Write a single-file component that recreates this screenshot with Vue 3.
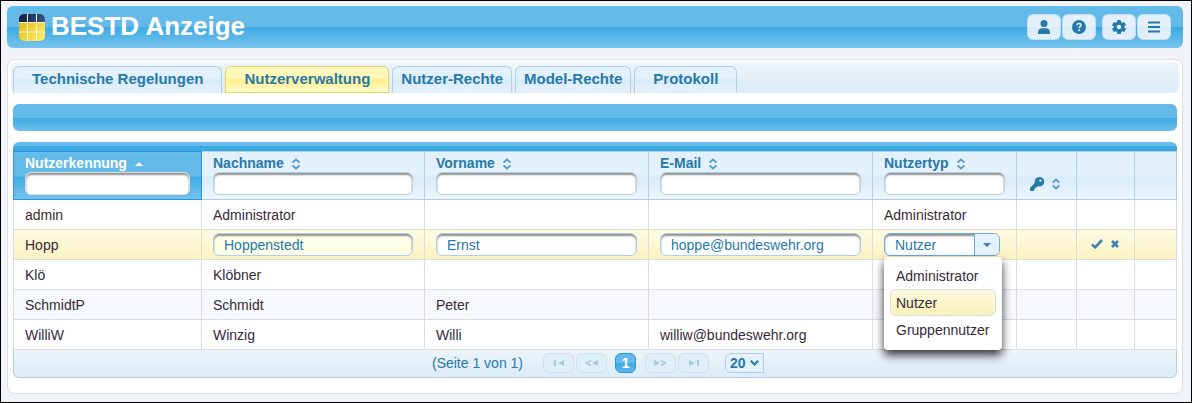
<script setup>
import { ref } from 'vue'

const tabs = [
  { name: 'Technische Regelungen', wide: true },
  { name: 'Nutzerverwaltung', wide: true },
  { name: 'Nutzer-Rechte', wide: false },
  { name: 'Model-Rechte', wide: false },
  { name: 'Protokoll', wide: true },
]
const activeTab = ref('Nutzerverwaltung')

const columns = ['Nutzerkennung', 'Nachname', 'Vorname', 'E-Mail', 'Nutzertyp']
const roles = ['Administrator', 'Nutzer', 'Gruppennutzer']

const rows = [
  { id: 'admin', last: 'Administrator', first: '', mail: '', role: 'Administrator' },
  { id: 'Hopp', edit: true },
  { id: 'Klö', last: 'Klöbner', first: '', mail: '', role: '' },
  { id: 'SchmidtP', last: 'Schmidt', first: 'Peter', mail: '', role: '' },
  { id: 'WilliW', last: 'Winzig', first: 'Willi', mail: 'williw@bundeswehr.org', role: '' },
]
const draft = ref({ last: 'Hoppenstedt', first: 'Ernst', mail: 'hoppe@bundeswehr.org', role: 'Nutzer' })
const pageSize = ref('20')
</script>

<template>
  <div class="page">
    <header class="topbar">
      <svg class="logo" width="26" height="27" viewBox="0 0 26 27" aria-hidden="true">
        <defs>
          <linearGradient id="gold" x1="0" y1="0" x2="1" y2="1">
            <stop offset="0" stop-color="#d9b40c" />
            <stop offset="1" stop-color="#fff06a" />
          </linearGradient>
          <linearGradient id="navy" x1="0" y1="0" x2="1" y2="0">
            <stop offset="0" stop-color="#141f45" />
            <stop offset="1" stop-color="#35548a" />
          </linearGradient>
          <clipPath id="tile"><rect width="26" height="27" rx="5" /></clipPath>
        </defs>
        <g clip-path="url(#tile)">
          <rect width="26" height="27" fill="url(#gold)" />
          <rect width="26" height="8" fill="url(#navy)" />
          <path d="M8.500 0V27M17.500 0V27M0 8.500H26M0 18H26" stroke="#fff6cf" stroke-width="1" />
        </g>
      </svg>
      <h1>BESTD Anzeige</h1>
      <div class="actions">
        <div class="group">
          <button type="button" aria-label="Benutzer">
            <svg width="12" height="14" viewBox="0 0 12 14"><circle cx="6" cy="3.500" r="3.500" /><path d="M0 14V12.500C0 9.800 1.800 8.300 4.300 8.300H7.700C10.200 8.300 12 9.800 12 12.500V14Z" /></svg>
          </button>
          <button type="button" aria-label="Hilfe">
            <svg width="14" height="14" viewBox="0 0 14 14"><circle cx="7" cy="7" r="7" /><path d="M5 5.400C5.100 4.200 5.900 3.600 7 3.600C8.200 3.600 9 4.300 9 5.300C9 6.600 7.100 6.700 7.100 8.200" fill="none" stroke="#e4f1fb" stroke-width="1.500" /><circle cx="7.100" cy="10.200" r="1" fill="#e4f1fb" /></svg>
          </button>
        </div>
        <div class="group">
          <button type="button" aria-label="Einstellungen">
            <svg width="14" height="14" viewBox="0 0 14 14">
              <g>
                <rect v-for="a in [0, 60, 120]" :key="a" x="5" y="0" width="4" height="14" rx="0.800" :transform="`rotate(${a} 7 7)`" />
                <circle cx="7" cy="7" r="5.400" />
                <circle cx="7" cy="7" r="2.200" fill="#e4f1fb" />
              </g>
            </svg>
          </button>
          <button type="button" aria-label="Menü">
            <svg width="12" height="12" viewBox="0 0 12 12"><path d="M0.500 1.500H11.500M0.500 6H11.500M0.500 10.500H11.500" fill="none" stroke="#2779aa" stroke-width="1.800" stroke-linecap="round" /></svg>
          </button>
        </div>
      </div>
    </header>

    <main class="panel">
      <nav class="tabs">
        <button
          v-for="t in tabs"
          :key="t.name"
          type="button"
          class="tab"
          :class="{ wide: t.wide, active: t.name === activeTab }"
          @click="activeTab = t.name"
        >{{ t.name }}</button>
      </nav>

      <div class="content">
        <div class="toolbar"></div>

        <div class="grid-head"></div>
        <table>
          <colgroup>
            <col class="c-id"><col class="c-last"><col class="c-text"><col class="c-text">
            <col class="c-role"><col class="c-key"><col class="c-edit"><col class="c-end">
          </colgroup>
          <thead>
            <tr>
              <th v-for="(c, i) in columns" :key="c" :class="{ sorted: i === 0 }">
                <div class="caption">
                  <label :for="'filter-' + i">{{ c }}</label>
                  <svg v-if="i === 0" width="8" height="4" viewBox="0 0 8 4"><path d="M0 4L4 0L8 4Z" fill="#fff" /></svg>
                  <svg v-else width="8" height="12" viewBox="0 0 8 12"><path d="M0.500 4.500L4 1.500L7.500 4.500M0.500 7.500L4 10.500L7.500 7.500" class="sort" /></svg>
                </div>
                <input :id="'filter-' + i" type="text" class="field">
              </th>
              <th>
                <div class="keyhead">
                  <svg width="14" height="14" viewBox="0 0 14 14"><path fill="#2779aa" fill-rule="evenodd" d="M9.300 0A4.700 4.700 0 1 1 8 9.100L7 10.200H5.700V11.600H4.300V13.200L3.500 14H0.600L0 13.400V10.700L4.800 5.900A4.700 4.700 0 0 1 9.300 0ZM10.400 2.400A1.200 1.200 0 1 0 10.401 4.800A1.200 1.200 0 0 0 10.400 2.400Z" /></svg>
                  <svg width="8" height="12" viewBox="0 0 8 12"><path d="M0.500 4.500L4 1.500L7.500 4.500M0.500 7.500L4 10.500L7.500 7.500" class="sort" /></svg>
                </div>
              </th>
              <th></th>
              <th></th>
            </tr>
          </thead>
          <tbody>
            <tr v-for="(r, i) in rows" :key="r.id" :class="{ editing: r.edit, odd: i === 3 }">
              <td>{{ r.id }}</td>
              <template v-if="r.edit">
                <td class="control"><input v-model="draft.last" type="text" class="field current" aria-label="Nachname"></td>
                <td class="control"><input v-model="draft.first" type="text" class="field" aria-label="Vorname"></td>
                <td class="control"><input v-model="draft.mail" type="text" class="field" aria-label="E-Mail"></td>
                <td class="control">
                  <div class="combo">
                    <select v-model="draft.role" aria-label="Nutzertyp">
                      <option v-for="o in roles" :key="o">{{ o }}</option>
                    </select>
                    <span class="trigger"><svg width="8" height="4" viewBox="0 0 8 4"><path d="M0 0H8L4 4Z" fill="#3d80b3" /></svg></span>
                    <ul class="menu" role="listbox" aria-label="Nutzertyp">
                      <li
                        v-for="o in roles"
                        :key="o"
                        role="option"
                        :aria-selected="o === draft.role"
                        :class="{ chosen: o === draft.role }"
                        @click="draft.role = o"
                      >{{ o }}</li>
                    </ul>
                  </div>
                </td>
                <td></td>
                <td class="control">
                  <div class="rowtools">
                    <button type="button" aria-label="Speichern"><svg width="12" height="10" viewBox="0 0 12 10"><path d="M1 5.500L4.200 8.300L11 1" fill="none" stroke="#3d80b3" stroke-width="2.600" /></svg></button>
                    <button type="button" aria-label="Abbrechen"><svg width="8" height="8" viewBox="0 0 8 8"><path d="M1 1L7 7M7 1L1 7" fill="none" stroke="#3d80b3" stroke-width="2.600" /></svg></button>
                  </div>
                </td>
              </template>
              <template v-else>
                <td>{{ r.last }}</td>
                <td>{{ r.first }}</td>
                <td>{{ r.mail }}</td>
                <td>{{ r.role }}</td>
                <td></td>
                <td></td>
              </template>
              <td></td>
            </tr>
          </tbody>
        </table>

        <div class="pager">
          <span>(Seite 1 von 1)</span>
          <div class="steps">
            <button type="button" disabled aria-label="Erste Seite"><svg width="10" height="6" viewBox="0 0 10 6"><path d="M0 0H2V6H0ZM10 0V6L4 3Z" /></svg></button>
            <button type="button" disabled aria-label="Vorherige Seite"><svg width="13" height="6" viewBox="0 0 13 6"><path d="M13 0V6L7 3Z" /><path d="M6 0.500L1 3L6 5.500" class="line" /></svg></button>
          </div>
          <button type="button" class="current-page">1</button>
          <div class="steps">
            <button type="button" disabled aria-label="Nächste Seite"><svg width="13" height="6" viewBox="0 0 13 6"><path d="M0 0V6L6 3Z" /><path d="M7 0.500L12 3L7 5.500" class="line" /></svg></button>
            <button type="button" disabled aria-label="Letzte Seite"><svg width="10" height="6" viewBox="0 0 10 6"><path d="M8 0H10V6H8ZM0 0V6L6 3Z" /></svg></button>
          </div>
          <div class="size">
            <select v-model="pageSize" aria-label="Zeilen pro Seite">
              <option>20</option>
              <option>50</option>
            </select>
            <svg width="9" height="6" viewBox="0 0 9 6"><path d="M0.800 0.800L4.500 4.500L8.200 0.800" fill="none" stroke="#2779aa" stroke-width="2" /></svg>
          </div>
        </div>
      </div>
    </main>
  </div>
</template>

<style>
body {
  background: #f0f4f8;
}
</style>

<style scoped>
* {
  box-sizing: border-box;
}
.page {
  min-height: 100vh;
  padding: 5px 8px 8px 6px;
  border: 1px solid #000;
  background: #f0f4f8;
  font: 14px/17px "Liberation Sans", Arial, sans-serif;
  color: #362b36;
}
button,
input,
select {
  margin: 0;
  padding: 0;
  border: 0;
  background: none;
  font: inherit;
  color: #2779aa;
}
svg {
  display: block;
  flex: none;
}
.topbar {
  display: flex;
  align-items: center;
  height: 42px;
  padding: 0 12px;
  border-radius: 6px;
  background: linear-gradient(#62bbe9, #65b9e9 50%, #3baae3 50%, #77c3ec);
}
h1 {
  margin: 0 0 0 6px;
  padding-bottom: 2px;
  font-size: 26px;
  line-height: 30px;
  color: #fff;
}
.actions {
  display: flex;
  gap: 6px;
  margin-left: auto;
}
.group {
  display: flex;
  gap: 1px;
}
.group button {
  display: flex;
  align-items: center;
  justify-content: center;
  width: 34px;
  height: 26px;
  border: 1px solid #c3def2;
  border-radius: 6px;
  background: linear-gradient(#e4f1fb, #e2f0fa 50%, #d9ebf8 50%, #e4f1fb);
}
.group svg {
  fill: #2779aa;
}
.panel {
  margin-top: 11px;
  padding: 2px 3px 15px;
  border: 1px solid #ddd;
  border-radius: 8px;
  background: #fff;
}
.tabs {
  display: flex;
  gap: 3px;
  padding: 4px 2px 0;
  border-radius: 6px;
  background: linear-gradient(#eff5fb, #deedf7 80%);
}
.tab {
  height: 27px;
  padding: 0 8px 2px;
  border: 1px solid #aed0ea;
  border-bottom-color: #deedf7;
  border-radius: 6px 6px 0 0;
  background: linear-gradient(#e4f1fb, #e1f0fa 50%, #d7ebf9 50%, #e6f2fc);
  font-size: 15px;
  font-weight: bold;
}
.tab.wide {
  padding: 0 18px 2px;
}
.tab.active {
  border-color: #e4d35c;
  background: linear-gradient(#fff8bf, #fff6b3 50%, #ffef8f 50%, #fff9c8);
}
.content {
  padding: 0 2px;
}
.toolbar {
  height: 27px;
  margin: 11px 0;
  border-radius: 6px;
  background: linear-gradient(#62bbe9, #65b9e9 50%, #3baae3 50%, #6fc0ec);
}
.grid-head {
  height: 9px;
  border-radius: 6px 6px 0 0;
  background: linear-gradient(#65bae9 50%, #3baae3 50%);
}
table {
  width: 100%;
  table-layout: fixed;
  border-collapse: collapse;
}
.c-id { width: 188px; }
.c-last { width: 223px; }
.c-text { width: 224px; }
.c-role { width: 144px; }
.c-key { width: 60px; }
.c-edit { width: 58px; }
.c-end { width: 42px; }
th {
  padding: 3px 11px 4px;
  border: 1px solid #aed0ea;
  background: linear-gradient(#e2f0fa, #e3f1fa 50%, #d7ebf9 50%, #edf6fd);
  color: #2779aa;
  text-align: left;
}
th.sorted {
  border-color: #2694e8;
  background: linear-gradient(#62bbe9, #65b9e9 50%, #3baae3 50%, #77c3ec);
  color: #fff;
}
.caption {
  display: flex;
  align-items: center;
  gap: 8px;
  height: 17px;
  line-height: 19px;
}
.sort {
  fill: none;
  stroke: #5a9aca;
  stroke-width: 1.800;
}
.keyhead {
  display: flex;
  align-items: center;
  gap: 8px;
  padding: 17px 0 0 2px;
}
.field {
  display: block;
  width: 100%;
  height: 23px;
  padding: 0 10px;
  border: 1px solid #aed0ea;
  border-radius: 6px;
  background: #fff;
  box-shadow: inset 0 2px 2px #8f8f8f;
}
.sorted .field {
  border-color: #ddd;
}
.field.current {
  background: #fdffe6;
}
td {
  height: 30px;
  padding: 2px 11px 0;
  border: 1px solid #ddd;
}
td.control {
  padding: 0 11px;
}
.odd td {
  background: #f5f9fd;
}
.editing td {
  background: linear-gradient(#fefbe4, #fbf2bf);
}
.combo {
  position: relative;
  display: flex;
  width: 116px;
  height: 23px;
  border: 1px solid #6aade0;
  border-radius: 6px;
  background: #fff;
}
.combo select {
  appearance: none;
  width: 100%;
  padding: 2px 26px 0 10px;
  border-radius: 5px;
  box-shadow: inset 0 2px 2px #8f8f8f;
}
.trigger {
  position: absolute;
  top: 0;
  right: 0;
  bottom: 0;
  display: flex;
  align-items: center;
  justify-content: center;
  width: 25px;
  border-left: 1px solid #6aade0;
  border-radius: 0 5px 5px 0;
  background: linear-gradient(#e8f3fc, #e4f1fb 50%, #dceefa 50%, #f0f7fd);
  pointer-events: none;
}
.menu {
  position: absolute;
  z-index: 1;
  top: 23px;
  left: -1px;
  width: 118px;
  margin: 0;
  padding: 5px 6px 7px;
  border-radius: 4px;
  background: #fff;
  box-shadow: 0 5px 10px rgba(0, 0, 0, 0.8);
  list-style: none;
}
.menu li {
  padding: 5px 5px 3px;
  border: 1px solid transparent;
  border-radius: 6px;
  cursor: pointer;
}
.menu li.chosen {
  border-color: #ddd;
  background: linear-gradient(#fefae0, #fbf1b8);
}
.rowtools {
  display: flex;
  align-items: center;
  gap: 8px;
  padding: 0 0 2px 3px;
}
.pager {
  display: flex;
  align-items: center;
  justify-content: center;
  height: 28px;
  padding: 0 0 1px 6px;
  border: solid #aed0ea;
  border-width: 0 1px 1px;
  border-radius: 0 0 6px 6px;
  background: linear-gradient(#edf4fa, #deedf7 80%);
  color: #2779aa;
}
.steps {
  display: flex;
  gap: 2px;
}
.pager span {
  margin-right: 20px;
}
.steps button {
  display: flex;
  align-items: center;
  justify-content: center;
  width: 31px;
  height: 20px;
  border: 1px solid #cde2f2;
  border-radius: 6px;
  background: #e0eef8;
}
.steps svg {
  fill: #a9cbe2;
}
.line {
  fill: none;
  stroke: #a9cbe2;
  stroke-width: 1.500;
}
.current-page {
  width: 21px;
  height: 20px;
  margin: 0 9px 0 8px;
  border: 1px solid #2694e8;
  border-radius: 6px;
  background: linear-gradient(#65bae9 50%, #3baae3 50%, #5bb6e8);
  color: #fff;
  font-weight: bold;
}
.size {
  position: relative;
  margin-left: 16px;
}
.size select {
  display: block;
  appearance: none;
  width: 39px;
  height: 20px;
  padding-left: 4px;
  border: 1px solid #aed0ea;
  border-radius: 6px 0 0 6px;
  background: #e4f1fb;
  font-weight: bold;
}
.size svg {
  position: absolute;
  top: 7px;
  right: 5px;
  pointer-events: none;
}
</style>
